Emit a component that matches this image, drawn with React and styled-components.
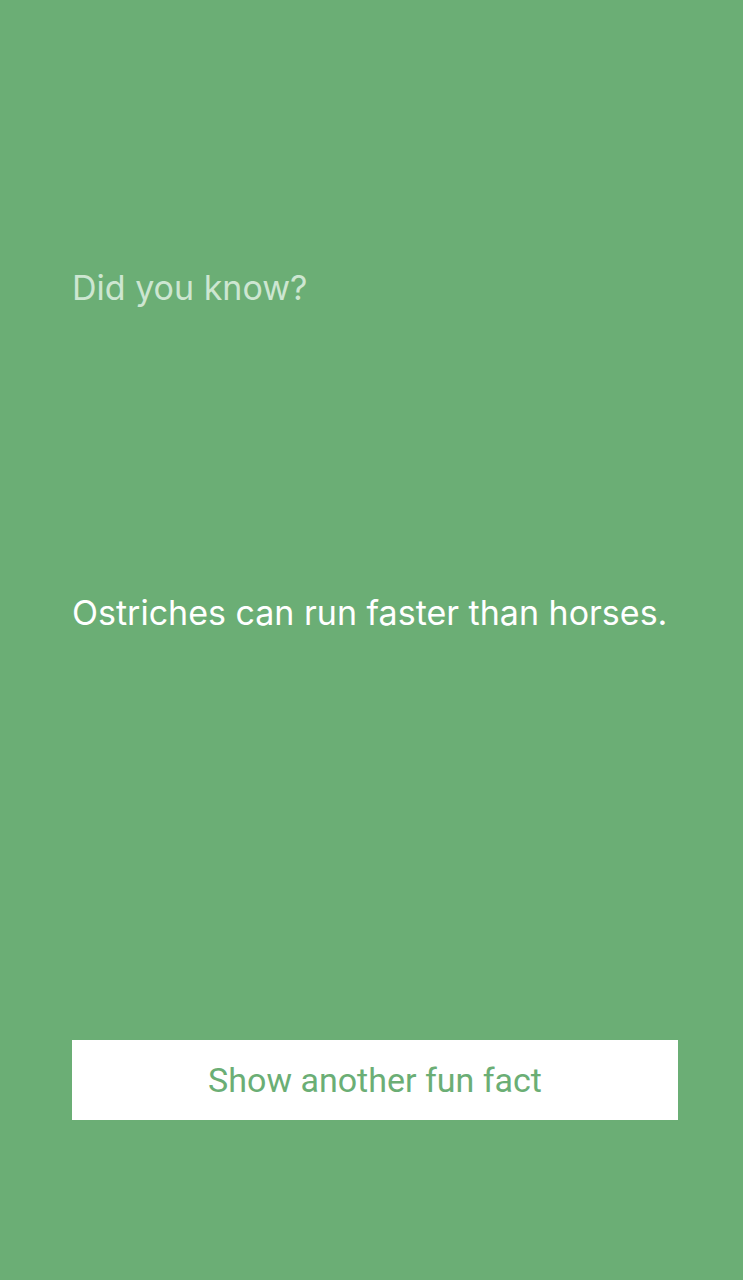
import styled, { createGlobalStyle } from "styled-components";

const GlobalStyle = createGlobalStyle`
  html, body {
    margin: 0;
    padding: 0;
    background: #6bae75;
  }
  body {
    font-family: Inter, "Noto Sans", sans-serif;
  }
`;

const Page = styled.div`
  display: flex;
  flex-direction: column;
  width: 743px;
  height: 1280px;
  box-sizing: border-box;
  padding: 268px 65px 0 72px;
  background: #6bae75;
`;

const Label = styled.p`
  margin: 0;
  font-size: 34px;
  line-height: 40px;
  color: #cde6d1;
`;

const Fact = styled.p`
  margin: 285px 0 0;
  font-size: 34px;
  line-height: 40px;
  color: #ffffff;
`;

const FactButton = styled.button`
  margin-top: 407px;
  height: 80px;
  width: 100%;
  border: none;
  background: #ffffff;
  color: #6bae75;
  font-family: Roboto, "Noto Sans", sans-serif;
  font-size: 34px;
  cursor: pointer;
`;

const App = () => {
  return (
    <>
      <GlobalStyle />
      <Page>
        <Label>Did you know?</Label>
        <Fact>Ostriches can run faster than horses.</Fact>
        <FactButton>Show another fun fact</FactButton>
      </Page>
    </>
  );
};

export default App;
